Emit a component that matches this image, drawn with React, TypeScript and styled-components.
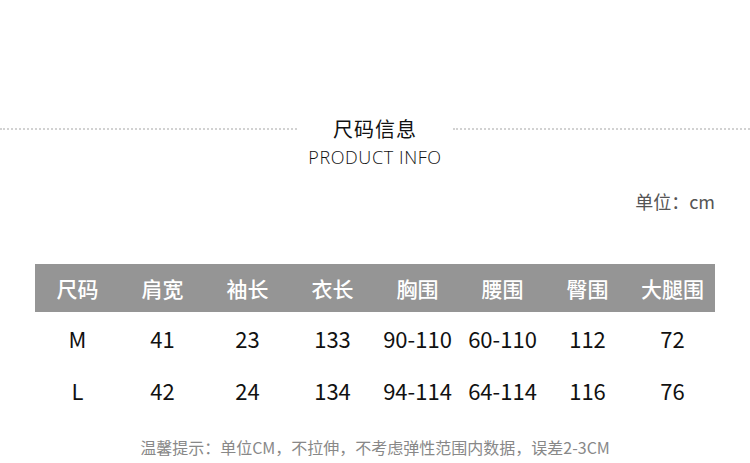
import React from "react";
import styled, { createGlobalStyle } from "styled-components";

const GlobalStyle = createGlobalStyle`
  html, body {
    margin: 0;
    padding: 0;
    background: #fff;
  }
  body {
    font-family: "Noto Sans CJK SC", "Noto Sans", sans-serif;
  }
`;

const columns = ["尺码", "肩宽", "袖长", "衣长", "胸围", "腰围", "臀围", "大腿围"];

const rows = [
  ["M", "41", "23", "133", "90-110", "60-110", "112", "72"],
  ["L", "42", "24", "134", "94-114", "64-114", "116", "76"],
];

const App = () => {
  return (
    <Page>
      <GlobalStyle />
      <TitleRow>
        <DotLine />
        <Title>尺码信息</Title>
        <DotLine />
      </TitleRow>
      <SubTitle>PRODUCT INFO</SubTitle>
      <UnitRow>单位：cm</UnitRow>
      <Table>
        <HeadRow>
          {columns.map((c) => (
            <HeadCell key={c}>{c}</HeadCell>
          ))}
        </HeadRow>
        <Body>
          {rows.map((r) => (
            <DataRow key={r[0]}>
              {r.map((v, i) => (
                <DataCell key={i}>{v}</DataCell>
              ))}
            </DataRow>
          ))}
        </Body>
      </Table>
      <Note>温馨提示：单位CM，不拉伸，不考虑弹性范围内数据，误差2-3CM</Note>
    </Page>
  );
};

export default App;

const Page = styled.div`
  width: 750px;
  height: 463px;
  overflow: hidden;
  padding-top: 117px;
  box-sizing: border-box;
  display: flex;
  flex-direction: column;
`;

const TitleRow = styled.div`
  display: flex;
  align-items: center;
  gap: 36px;
`;

const DotLine = styled.div`
  flex: 1;
  height: 0;
  border-top: 2px dotted #d2d2d2;
`;

const Title = styled.div`
  font-size: 20px;
  line-height: 24px;
  color: #111;
  letter-spacing: 1px;
`;

const SubTitle = styled.div`
  margin-top: 6px;
  text-align: center;
  font-family: "Open Sans", "Liberation Sans", sans-serif;
  font-weight: 300;
  font-size: 18px;
  line-height: 20px;
  letter-spacing: 0.6px;
  color: #111;
`;

const UnitRow = styled.div`
  margin-top: 24px;
  padding-right: 35px;
  text-align: right;
  font-size: 18px;
  line-height: 20px;
  color: #555;
`;

const Table = styled.div`
  margin: 53px 35px 0;
`;

const HeadRow = styled.div`
  display: grid;
  grid-template-columns: repeat(8, 1fr);
  height: 48px;
  background: #959595;
  align-items: center;
`;

const HeadCell = styled.div`
  text-align: center;
  color: #fff;
  font-size: 21px;
  font-weight: 500;
`;

const Body = styled.div``;

const DataRow = styled.div`
  display: grid;
  grid-template-columns: repeat(8, 1fr);
  height: 52px;
  align-items: center;
`;

const DataCell = styled.div`
  text-align: center;
  color: #111;
  font-size: 22px;
`;

const Note = styled.div`
  margin-top: 22px;
  text-align: center;
  font-size: 16px;
  line-height: 18px;
  color: #888;
`;
